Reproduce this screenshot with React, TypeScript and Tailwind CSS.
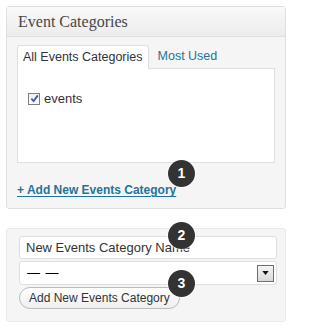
import React from "react";

function Badge({ n, className }: { n: number; className: string }) {
  return (
    <span
      className={
        "absolute flex h-[27px] w-[27px] items-center justify-center rounded-full bg-[#333333] text-[14px] font-bold text-white shadow-[0_0_0_1px_rgba(255,255,255,0.6)] " +
        className
      }
      style={{ fontFamily: '"Liberation Sans", Arial, sans-serif' }}
    >
      {n}
    </span>
  );
}

export default function App() {
  return (
    <div
      className="relative h-[329px] w-[292px] overflow-hidden bg-white text-[#333]"
      style={{ fontFamily: '"Liberation Sans", Arial, sans-serif' }}
    >
      <div className="px-[6px] pt-[6px]">
        {/* Event Categories box */}
        <div className="h-[203px] w-[280px] rounded-[3px] border border-[#dfdfdf] bg-[#f5f5f5]">
          <div className="flex h-[30px] items-center border-b border-[#dfdfdf] bg-gradient-to-b from-[#f9f9f9] to-[#ececec] px-[11px] pt-[1px]">
            <h3
              className="text-[16px] text-[#464646]"
              style={{ fontFamily: '"Liberation Serif", Georgia, serif' }}
            >
              Event Categories
            </h3>
          </div>

          <div className="px-[10px] pt-[8px]">
            <div className="flex items-end">
              <div className="relative z-10 -mb-px flex h-[24px] items-center rounded-t-[3px] border border-b-0 border-[#dfdfdf] bg-white px-[5px] text-[12.5px] text-[#333]">
                All Events Categories
              </div>
              <div className="flex h-[23px] items-center px-[9px] text-[12.5px] text-[#21759b]">
                Most Used
              </div>
            </div>
            <div className="h-[95px] w-[258px] border border-[#dfdfdf] bg-white px-[10px] pt-[20px]">
              <label className="flex items-center gap-[4px] text-[13px] text-[#333]">
                <span className="flex h-[12px] w-[12px] items-center justify-center border border-[#7f7f7f] bg-gradient-to-b from-[#f0f0f0] to-white">
                  <svg viewBox="0 0 10 10" className="h-[9px] w-[9px]">
                    <path d="M1.5 5.2 L4 7.8 L8.7 1.5" fill="none" stroke="#3d5aa8" strokeWidth="2" />
                  </svg>
                </span>
                events
              </label>
            </div>
            <div className="pt-[14px]">
              <a className="text-[12px] font-bold text-[#21759b] underline underline-offset-[2px]">
                + Add New Events Category
              </a>
            </div>
          </div>
        </div>

        {/* Add new category form */}
        <div className="mt-[19px] h-[94px] w-[280px] rounded-[3px] border border-[#ebebeb] bg-[#f5f5f5] px-[12px] pt-[7px]">
          <div className="flex h-[23px] w-[258px] items-center rounded-[3px] border border-[#dfdfdf] bg-white px-[6px] text-[13px] text-[#333]">
            New Events Category Name
          </div>
          <div className="mt-[2px] flex h-[24px] w-[258px] items-center justify-between rounded-[3px] border border-[#dfdfdf] bg-white pl-[7px] pr-[2px] text-[13px] text-black">
            <span className="tracking-[1px]">— —</span>
            <span className="flex h-[17px] w-[17px] items-center justify-center border border-[#6f6f6f] bg-gradient-to-b from-[#f4f4f4] to-[#d8d8d8]">
              <svg viewBox="0 0 8 5" className="h-[4px] w-[7px]">
                <path d="M0 0 H8 L4 5 Z" fill="#111" />
              </svg>
            </span>
          </div>
          <button className="mt-[2px] flex h-[22px] items-center rounded-full border border-[#bbb] bg-gradient-to-b from-white to-[#efefef] px-[9px] text-[12px] text-[#333]">
            Add New Events Category
          </button>
        </div>
      </div>

      <Badge n={1} className="left-[168px] top-[160px]" />
      <Badge n={2} className="left-[168px] top-[222px]" />
      <Badge n={3} className="left-[168px] top-[270px]" />
    </div>
  );
}
